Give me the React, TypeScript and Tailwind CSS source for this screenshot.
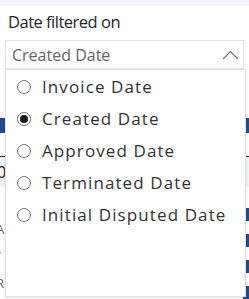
import React, { useState } from "react";

const OPTIONS = [
  "Invoice Date",
  "Created Date",
  "Approved Date",
  "Terminated Date",
  "Initial Disputed Date",
];

const font = { fontFamily: '"Open Sans", "Noto Sans", sans-serif' };

function Radio({ checked }: { checked: boolean }) {
  return (
    <span className="flex h-[14px] w-[14px] shrink-0 items-center justify-center rounded-full border border-[#7a7a7a] bg-white">
      {checked && <span className="h-[8px] w-[8px] rounded-full bg-[#1b1b1b]" />}
    </span>
  );
}

export default function App() {
  const [selected, setSelected] = useState("Created Date");

  return (
    <div
      className="relative h-[299px] w-[249px] overflow-hidden bg-white"
      style={font}
    >
      {/* top strip */}
      <div className="h-[6px] bg-[#f3f4f8]" />

      {/* slicer header */}
      <div className="mt-[4px] pl-[8px] text-[16.5px] leading-[24px] tracking-[-0.5px] text-[#252423]">
        Date filtered on
      </div>
      <div className="mx-[5px] mt-[6px] flex h-[29px] items-center justify-between border border-[#e6e6e6] pl-[6px] pr-[4px]">
        <span className="text-[16px] leading-[20px] text-[#666666]">{selected}</span>
        <svg width="17" height="10" viewBox="0 0 17 10" fill="none">
          <path d="M1 9 L8.5 1.5 L16 9" stroke="#707070" strokeWidth="1.1" />
        </svg>
      </div>

      {/* report content behind the dropdown */}
      <div className="mt-[49px] h-[15px] bg-[#1f4b8e]" />
      <div className="mt-[23px] h-px bg-[#222222]" />
      <div className="flex h-[30px] items-center bg-[#f3f4f6]">
        <span className="-ml-[3px] text-[16px] text-[#252423]">0</span>
      </div>
      <div className="mt-[15px] flex justify-between">
        <div className="flex flex-col pt-[14px] text-[13px] leading-[27px] text-[#6b6b6b]">
          <span className="-ml-[4px]">A</span>
          <span className="-ml-[4px]">/</span>
          <span className="-ml-[4px]">R</span>
        </div>
        <div className="flex flex-col gap-[13px] pt-[6px]">
          <div className="h-[13px] w-[6px] bg-[#1f4b8e]" />
          <div className="h-[13px] w-[6px] bg-[#1f4b8e]" />
          <div className="h-[13px] w-[6px] bg-[#1f4b8e]" />
          <div className="h-[13px] w-[6px] bg-[#1f4b8e]" />
        </div>
      </div>

      {/* dropdown list */}
      <div className="absolute left-[5px] top-[69px] h-[228px] w-[241px] border border-[#e3e3e3] bg-white pt-[1px] shadow-[0_1px_3px_rgba(0,0,0,0.12)]">
        {OPTIONS.map((option) => (
          <button
            key={option}
            onClick={() => setSelected(option)}
            className="flex h-[32px] w-full items-center gap-[11px] pl-[11px] text-left"
          >
            <Radio checked={selected === option} />
            <span className="text-[17px] leading-[32px] tracking-[1.1px] text-[#333333]">
              {option}
            </span>
          </button>
        ))}
      </div>
    </div>
  );
}
